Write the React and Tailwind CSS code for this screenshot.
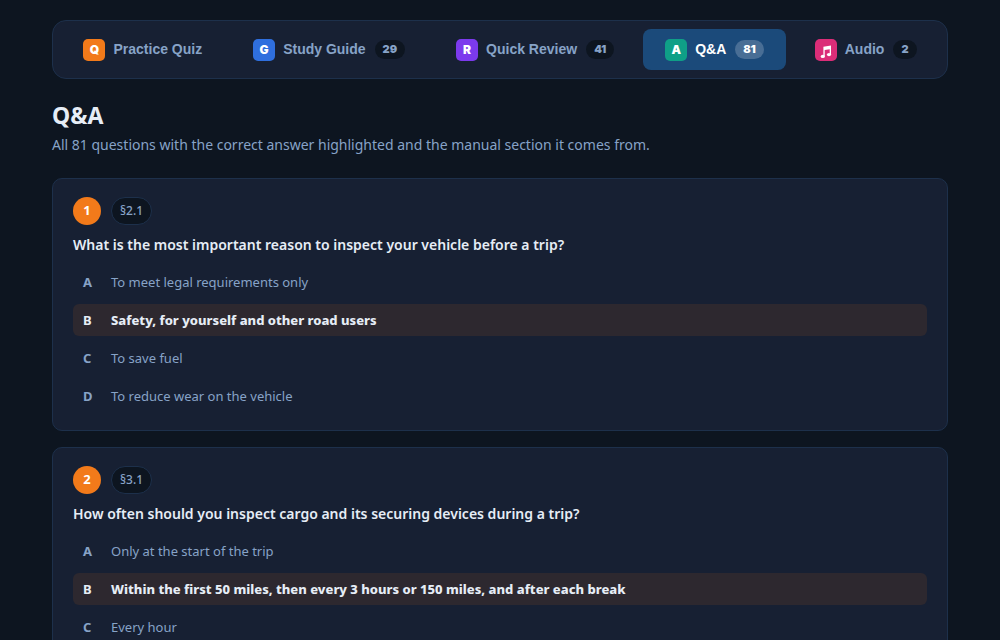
import React, { useState } from 'react';

const tabs = [
    { id: 'quiz', label: 'Practice Quiz', letter: 'Q', color: 'bg-[#f27a1a]' },
    { id: 'guide', label: 'Study Guide', letter: 'G', color: 'bg-[#2f6fde]', count: 29 },
    { id: 'review', label: 'Quick Review', letter: 'R', color: 'bg-[#7c3aed]', count: 41 },
    { id: 'qa', label: 'Q&A', letter: 'A', color: 'bg-[#0f9f87]', count: 81 },
    { id: 'audio', label: 'Audio', color: 'bg-[#db2d78]', count: 2 },
];

const questions = [
    {
        section: '§2.1',
        text: 'What is the most important reason to inspect your vehicle before a trip?',
        correct: 'B',
        options: [
            ['A', 'To meet legal requirements only'],
            ['B', 'Safety, for yourself and other road users'],
            ['C', 'To save fuel'],
            ['D', 'To reduce wear on the vehicle'],
        ],
    },
    {
        section: '§3.1',
        text: 'How often should you inspect cargo and its securing devices during a trip?',
        correct: 'B',
        options: [
            ['A', 'Only at the start of the trip'],
            ['B', 'Within the first 50 miles, then every 3 hours or 150 miles, and after each break'],
            ['C', 'Every hour'],
        ],
    },
];

const MusicNote = () => (
    <svg viewBox="0 0 12 14" className="h-3.5 w-3 mt-1" fill="currentColor" aria-hidden="true">
        <path d="M3.4 1.8 11 .6v9H9.7V4.2L4.7 5v6.4H3.4z" />
        <ellipse cx="2.8" cy="11.4" rx="2.1" ry="1.6" />
        <ellipse cx="9" cy="9.6" rx="2.1" ry="1.6" />
    </svg>
);

const TabButton = ({ tab, active, onClick }) => (
    <button
        type="button"
        onClick={onClick}
        aria-current={active ? 'page' : undefined}
        className={`flex flex-auto items-center justify-center rounded-lg px-4 h-[41px] whitespace-nowrap font-['Liberation_Sans',Arial,sans-serif] text-[14px] font-bold ${
            active ? 'bg-[#1b4a7a] text-white' : 'text-[#87a3c7]'
        }`}
    >
        <span className={`flex size-[22px] items-center justify-center rounded-[5px] font-['Inter',sans-serif] text-[12px] font-black text-white ${tab.color}`}>
            {tab.letter || <MusicNote />}
        </span>
        <span className="ml-2">{tab.label}</span>
        {tab.count && (
            <span
                className={`ml-[9px] rounded-full px-2 font-['Inter',sans-serif] text-[11px] leading-[19px] font-black ${
                    active ? 'bg-[#496e95]' : 'bg-[#0d1520]'
                }`}
            >
                {tab.count}
            </span>
        )}
    </button>
);

const QuestionCard = ({ number, question }) => (
    <li className="rounded-[10px] border border-[#1d304b] bg-[#172033] px-5 py-[18px]">
        <div className="flex items-center gap-2.5">
            <span className="flex size-7 items-center justify-center rounded-full bg-[#f27a1a] text-[13px] font-bold text-white">
                {number}
            </span>
            <span className="flex h-7 items-center rounded-full border border-[#1d304b] bg-[#0d1520] px-2 text-[12px] font-medium">
                {question.section}
            </span>
        </div>
        <h2 className="mt-2 text-[14px] leading-[23px] font-semibold text-[#e6edf6]">{question.text}</h2>
        <ul className="mt-2.5 flex flex-col gap-1.5">
            {question.options.map(([letter, answer]) => {
                const isCorrect = letter === question.correct;
                return (
                    <li
                        key={letter}
                        className={`flex items-center gap-2.5 rounded-md px-2.5 py-1.5 text-[13px] leading-5 ${
                            isCorrect ? 'bg-[#2d282f] font-extrabold text-[#e6edf6]' : ''
                        }`}
                    >
                        <span className="w-[18px] font-bold">{letter}</span>
                        <span>{answer}</span>
                    </li>
                );
            })}
        </ul>
    </li>
);

const App = () => {
    const [activeTab, setActiveTab] = useState('qa');

    return (
        <div className="min-h-screen bg-[#0d1520] font-['Noto_Sans',sans-serif] text-[#87a3c7]">
            <div className="mx-auto max-w-[960px] px-8 py-5">
                <nav className="flex flex-wrap gap-1.5 rounded-[14px] border border-[#1d304b] bg-[#172033] p-2">
                    {tabs.map(tab => (
                        <TabButton
                            key={tab.id}
                            tab={tab}
                            active={tab.id === activeTab}
                            onClick={() => setActiveTab(tab.id)}
                        />
                    ))}
                </nav>

                <main>
                    <h1 className="mt-[22px] text-[23px] leading-7 font-bold text-[#e6edf6]">Q&A</h1>
                    <p className="mt-1 mb-[21px] text-[14px] leading-6">
                        All 81 questions with the correct answer highlighted and the manual section it comes from.
                    </p>
                    <ol className="flex flex-col gap-4">
                        {questions.map((question, i) => (
                            <QuestionCard key={question.section} number={i + 1} question={question} />
                        ))}
                    </ol>
                </main>
            </div>
        </div>
    );
};

export default App;
